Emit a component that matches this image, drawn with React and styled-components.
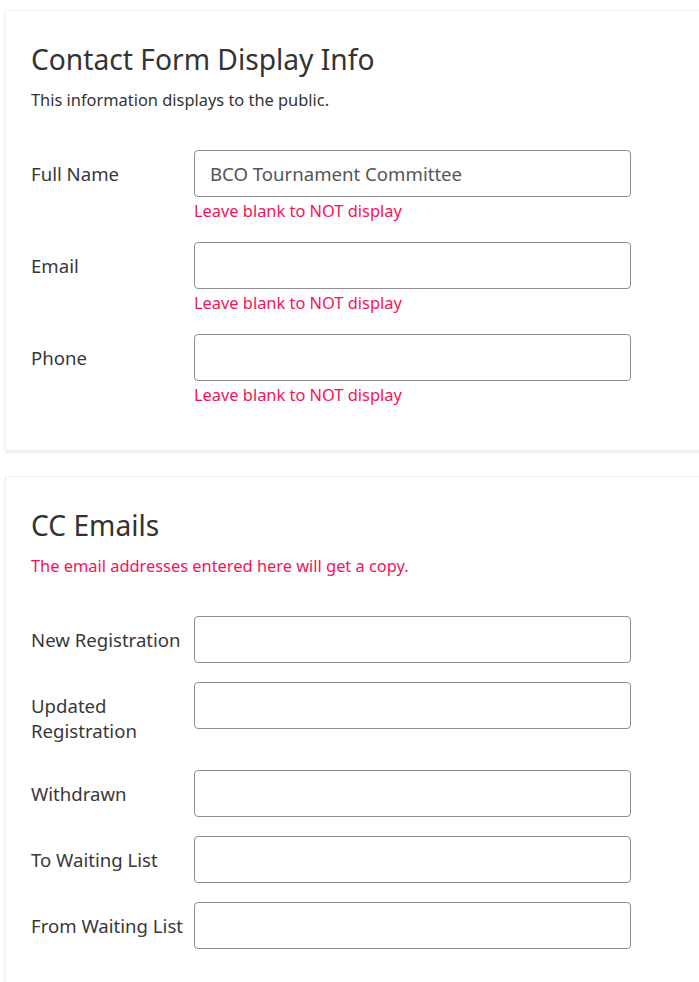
import React from "react";
import styled, { createGlobalStyle } from "styled-components";

const GlobalStyle = createGlobalStyle`
  html, body {
    margin: 0;
    padding: 0;
    background: #ffffff;
  }
  body {
    font-family: "Noto Sans", "Open Sans", Arial, sans-serif;
    color: #333333;
    overflow: hidden;
  }
`;

const Page = styled.div`
  box-sizing: border-box;
  width: 100vw;
  overflow: hidden;
  display: flex;
  flex-direction: column;
  gap: 25px;
  padding: 10px 0 0 5px;
`;

const Card = styled.section`
  width: calc(100% + 40px);
  box-sizing: border-box;
  flex-shrink: 0;
  background: #ffffff;
  border: 1px solid #efefef;
  box-shadow: 0 2px 2px rgba(0, 0, 0, 0.07);
  padding: 31px 25px 24px 25px;
`;

const Title = styled.h3`
  margin: 0;
  font-size: 28.2px;
  font-weight: 400;
  line-height: 34px;
  color: #333333;
`;

const Lead = styled.p`
  margin: 12px 0 38px;
  font-size: 16.4px;
  line-height: 24px;
  color: ${(p) => (p.$danger ? "#f2135a" : "#333333")};
`;

const Row = styled.div`
  display: grid;
  grid-template-columns: 163px 437px;
  align-items: start;
  margin-bottom: 19px;
`;

const Label = styled.label`
  font-size: 18.6px;
  line-height: 25px;
  padding: 11px 0 8px;
  color: #383838;
  white-space: ${(p) => (p.$wrap ? "normal" : "nowrap")};
  padding-right: ${(p) => (p.$wrap ? "40px" : "0")};
`;

const Field = styled.div`
  display: flex;
  flex-direction: column;
`;

const Input = styled.input`
  box-sizing: border-box;
  width: 437px;
  height: 47px;
  border: 1px solid #8f8f8f;
  border-radius: 4px;
  padding: 0 15px;
  font-family: inherit;
  font-size: 18.6px;
  color: #555555;
  background: #ffffff;
  outline: none;
`;

const Help = styled.div`
  margin-top: 2px;
  font-size: 16.4px;
  line-height: 24px;
  color: #f2135a;
`;

const contactRows = [
  { label: "Full Name", value: "BCO Tournament Committee" },
  { label: "Email", value: "" },
  { label: "Phone", value: "" },
];

const ccRows = [
  { label: "New Registration" },
  { label: "Updated Registration", wrap: true },
  { label: "Withdrawn" },
  { label: "To Waiting List" },
  { label: "From Waiting List" },
];

export default function App() {
  return (
    <>
      <GlobalStyle />
      <Page>
        <Card>
          <Title>Contact Form Display Info</Title>
          <Lead>This information displays to the public.</Lead>
          {contactRows.map((r) => (
            <Row key={r.label}>
              <Label>{r.label}</Label>
              <Field>
                <Input defaultValue={r.value} />
                <Help>Leave blank to NOT display</Help>
              </Field>
            </Row>
          ))}
        </Card>
        <Card>
          <Title>CC Emails</Title>
          <Lead $danger>The email addresses entered here will get a copy.</Lead>
          {ccRows.map((r) => (
            <Row key={r.label}>
              <Label $wrap={r.wrap}>{r.label}</Label>
              <Field>
                <Input />
              </Field>
            </Row>
          ))}
        </Card>
      </Page>
    </>
  );
}
